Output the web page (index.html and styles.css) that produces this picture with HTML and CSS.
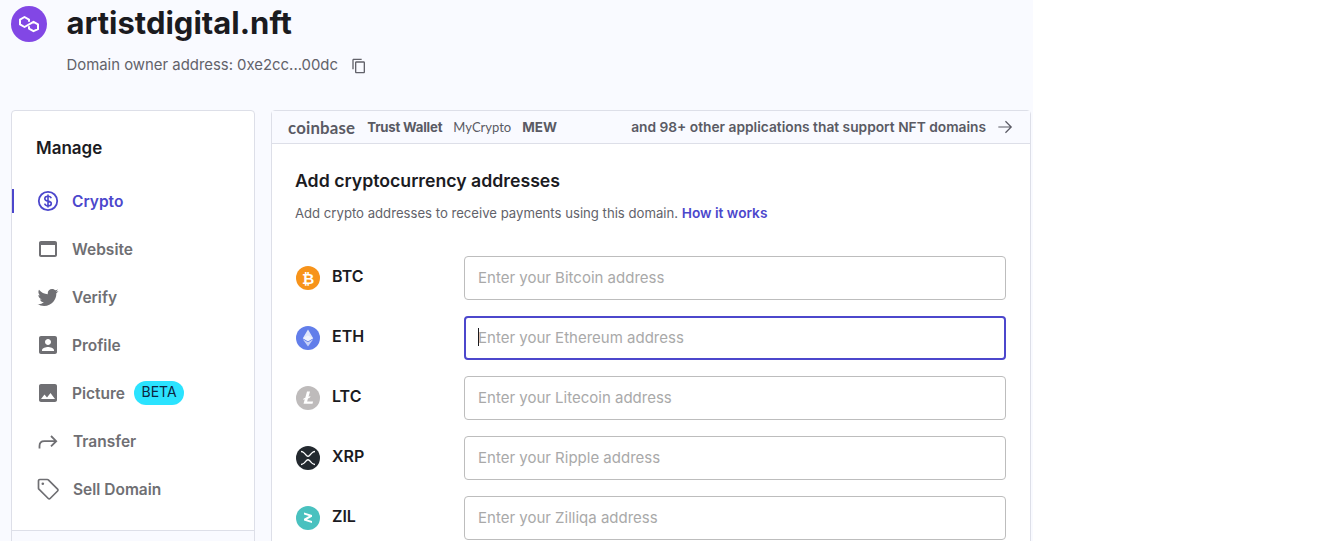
FILE: index.html
```html
<!DOCTYPE html>
<html lang="en">
<head>
<meta charset="utf-8">
<title>artistdigital.nft</title>
<link rel="stylesheet" href="styles.css">
</head>
<body>
<div class="app">
  <header class="head">
    <svg class="poly" viewBox="0 0 36 36"><circle cx="18" cy="18" r="18" fill="#8247e5"/><path d="M18 15.800v-2.200L13.500 11 9 13.600v4.800l4.500 2.600 9-5.200 4.500 2.600v4.800L22.500 25.200 18 22.600v-2.400" fill="none" stroke="#fff" stroke-width="2" stroke-linejoin="round"/></svg>
    <div class="head-text">
      <h1 class="domain">artistdigital.nft</h1>
      <div class="owner"><span>Domain owner address: 0xe2cc...00dc</span>
        <svg class="copy" viewBox="0 0 24 24"><path d="M16 1H4c-1.100 0-2 .9-2 2v14h2V3h12V1zm3 4H8c-1.100 0-2 .9-2 2v14c0 1.100.9 2 2 2h11c1.100 0 2-.9 2-2V7c0-1.100-.9-2-2-2zm0 16H8V7h11v14z"/></svg>
      </div>
    </div>
  </header>
  <div class="columns">
    <aside class="side">
      <h2 class="manage">Manage</h2>
      <nav class="nav">
        <a class="item active"><svg class="ico" viewBox="0 0 24 24"><circle cx="12" cy="12" r="9.200" fill="none" stroke="currentColor" stroke-width="1.800"/><path d="M15.200 9.300c-.3-1.300-1.600-2-3.200-2-1.800 0-3.200.9-3.200 2.400 0 3.300 6.500 1.500 6.500 4.700 0 1.500-1.500 2.400-3.300 2.400-1.700 0-3-.8-3.300-2.200M12 5.500v13" fill="none" stroke="currentColor" stroke-width="1.600"/></svg>Crypto</a>
        <a class="item"><svg class="ico" viewBox="0 0 24 24"><path d="M19 4H5c-1.110 0-2 .9-2 2v12c0 1.100.89 2 2 2h14c1.100 0 2-.9 2-2V6c0-1.100-.89-2-2-2zm0 14H5V8h14v10z"/></svg>Website</a>
        <a class="item"><svg class="ico" viewBox="0 0 24 24"><path d="M22.460 6c-.77.35-1.600.58-2.460.69.88-.53 1.560-1.370 1.880-2.380-.83.5-1.750.85-2.720 1.050C18.370 4.500 17.260 4 16 4c-2.350 0-4.270 1.920-4.270 4.290 0 .34.04.67.11.98C8.280 9.090 5.110 7.380 3 4.790c-.37.63-.58 1.370-.58 2.150 0 1.490.75 2.810 1.910 3.560-.71 0-1.370-.2-1.950-.5v.03c0 2.080 1.480 3.820 3.440 4.210a4.220 4.220 0 0 1-1.930.07 4.280 4.280 0 0 0 4 2.980 8.521 8.521 0 0 1-5.330 1.840c-.34 0-.68-.02-1.020-.06C3.440 20.290 5.700 21 8.120 21 16 21 20.330 14.460 20.330 8.790c0-.19 0-.37-.01-.56.84-.6 1.560-1.360 2.140-2.230z"/></svg>Verify</a>
        <a class="item"><svg class="ico" viewBox="0 0 24 24"><path d="M3 5v14c0 1.100.89 2 2 2h14c1.100 0 2-.9 2-2V5c0-1.100-.9-2-2-2H5c-1.110 0-2 .9-2 2zm12 4c0 1.660-1.340 3-3 3s-3-1.340-3-3 1.340-3 3-3 3 1.340 3 3zm-9 8c0-2 4-3.100 6-3.100s6 1.100 6 3.100v1H6v-1z"/></svg>Profile</a>
        <a class="item"><svg class="ico" viewBox="0 0 24 24"><path d="M21 19V5c0-1.100-.9-2-2-2H5c-1.100 0-2 .9-2 2v14c0 1.100.9 2 2 2h14c1.100 0 2-.9 2-2zM8.500 13.500l2.500 3.010L14.500 12l4.500 6H5l3.500-4.500z"/></svg>Picture<span class="beta">BETA</span></a>
        <a class="item shifted"><svg class="ico" viewBox="0 0 24 24"><path d="M3.500 19.500v-2.500c0-3 1.800-4.800 4.800-4.800H20M15 7l5.200 5.200L15 17.400" fill="none" stroke="currentColor" stroke-width="1.800"/></svg>Transfer</a>
        <a class="item shifted"><svg class="ico" viewBox="0 0 24 24"><path d="M2.500 3.800c0-.7.6-1.300 1.300-1.300h7.500c.4 0 .7.1 1 .4l9.300 9.300c.5.5.5 1.300 0 1.800l-7.500 7.500c-.5.5-1.300.5-1.800 0l-9.400-9.300c-.3-.3-.4-.6-.4-1z" fill="none" stroke="currentColor" stroke-width="1.700"/><circle cx="6.800" cy="6.800" r="1.300"/></svg>Sell Domain</a>
      </nav>
      <div class="side-foot"></div>
    </aside>
    <main class="card">
      <div class="apps">
        <div class="logos">
          <span class="logo-coinbase">coinbase</span>
          <span class="logo-trust">Trust Wallet</span>
          <span class="logo-my">MyCrypto</span>
          <span class="logo-mew">MEW</span>
        </div>
        <div class="apps-more">
          <span>and 98+ other applications that support NFT domains</span>
          <svg class="arrow" viewBox="0 0 18 18"><path d="M1.500 9h14M9.500 2.500L16 9l-6.500 6.500" fill="none" stroke="currentColor" stroke-width="1.400"/></svg>
        </div>
      </div>
      <section class="body">
        <h3 class="title">Add cryptocurrency addresses</h3>
        <p class="sub">Add crypto addresses to receive payments using this domain. <a class="link">How it works</a></p>
        <div class="rows">
          <div class="row">
            <div class="coin">
              <svg class="coin-ico" viewBox="0 0 24 24"><circle cx="12" cy="12" r="12" fill="#f7931a"/><text x="12" y="17.500" class="coin-b">₿</text></svg>
              <span>BTC</span>
            </div>
            <div class="field"><input class="input" placeholder="Enter your Bitcoin address"></div>
          </div>
          <div class="row">
            <div class="coin">
              <svg class="coin-ico" viewBox="0 0 24 24"><circle cx="12" cy="12" r="12" fill="#627eea"/><path d="M12 3.500L6.800 12.200 12 15.200l5.200-3z" fill="#fff" opacity=".8"/><path d="M12 16.300l-5.200-3L12 20.500l5.200-7.200z" fill="#fff" opacity=".65"/><path d="M12 9.500l-5.200 2.700 5.200 3 5.200-3z" fill="#fff" opacity=".5"/></svg>
              <span>ETH</span>
            </div>
            <div class="field focused"><input class="input" placeholder="Enter your Ethereum address"></div>
          </div>
          <div class="row">
            <div class="coin">
              <svg class="coin-ico" viewBox="0 0 24 24"><circle cx="12" cy="12" r="12" fill="#bebbbb"/><path d="M11 5.500h3l-1.500 5.200 2-.8-.5 1.700-2 .8-.9 3h6l-.6 2.300H7.500l1.300-4.400-1.600.6.4-1.500 1.700-.7z" fill="#fff"/></svg>
              <span>LTC</span>
            </div>
            <div class="field"><input class="input" placeholder="Enter your Litecoin address"></div>
          </div>
          <div class="row">
            <div class="coin">
              <svg class="coin-ico" viewBox="0 0 24 24"><circle cx="12" cy="12" r="12" fill="#23292f"/><path d="M5 5.500c1.500 0 2.300.6 3.300 1.600l2.200 2.400c.9.900 2.100.9 3 0l2.200-2.400c1-1 1.800-1.600 3.300-1.600M5 18.500c1.500 0 2.300-.6 3.300-1.600l2.200-2.400c.9-.9 2.100-.9 3 0l2.200 2.400c1 1 1.800 1.600 3.300 1.600" fill="none" stroke="#fff" stroke-width="1.300"/></svg>
              <span>XRP</span>
            </div>
            <div class="field"><input class="input" placeholder="Enter your Ripple address"></div>
          </div>
          <div class="row">
            <div class="coin">
              <svg class="coin-ico" viewBox="0 0 24 24"><circle cx="12" cy="12" r="12" fill="#49c1bf"/><path d="M8 6.500l8 2.500v1.700l-5 2.800 5 1.500v2l-8-2.500v-1.700l5-2.800-5-1.500z" fill="#fff"/></svg>
              <span>ZIL</span>
            </div>
            <div class="field"><input class="input" placeholder="Enter your Zilliqa address"></div>
          </div>
        </div>
      </section>
    </main>
  </div>
</div>
</body>
</html>
```
FILE: styles.css
```css
* { box-sizing: border-box; }
html, body { margin: 0; padding: 0; background: #fff; }
body { font-family: Inter, "Liberation Sans", sans-serif; color: #1b1b1f; height: 544px; overflow: hidden; }
.app { width: 1033px; height: 541px; overflow: hidden; background: #f9faff; padding-left: 11px; }

.head { display: flex; align-items: flex-start; height: 110px; gap: 20px; padding-top: 5px; }
.poly { width: 36px; height: 36px; flex: none; margin-top: 1px; }
.head-text { display: flex; flex-direction: column; margin-left: -.5px; }
.domain { margin: 0; font-size: 31px; line-height: 36px; font-weight: 700; color: #1b1b1f; }
.owner { display: flex; align-items: center; gap: 13px; margin-top: 12px; font-size: 14.900px; line-height: 24px; color: #62626a; }
.copy { width: 16px; height: 16px; fill: #62626a; margin-top: 2px; }

.columns { display: flex; align-items: flex-start; gap: 16px; }
.side { width: 244px; height: 500px; background: #fff; border: 1px solid #dddfe8; border-radius: 4px 4px 0 0; padding-top: 26px; }
.manage { margin: 0 0 18px 24px; font-size: 17px; line-height: 22px; font-weight: 600; color: #1b1b1f; }
.nav { display: flex; flex-direction: column; }
.item { position: relative; display: flex; align-items: center; height: 48px; padding-left: 24px; gap: 12px; font-size: 15.500px; font-weight: 600; color: #6f6f73; }
.item.shifted { gap: 13px; }
.item.active { color: #4c47cc; }
.item.active::before { content: ""; position: absolute; left: 0; top: 12px; width: 2px; height: 24px; background: #4c47cc; }
.ico { width: 24px; height: 24px; flex: none; fill: currentColor; }
.beta { margin-left: -3px; width: 50px; height: 24px; border-radius: 12px; background: #2be3ff; color: #0d2540; font-size: 14px; font-weight: 400; line-height: 22px; text-align: center; }
.side-foot { margin-top: 17px; height: 20px; border-top: 1px solid #dddfe8; background: #f9faff; }

.card { width: 760px; height: 500px; background: #fff; border: 1px solid #dddfe8; border-radius: 4px 4px 0 0; }
.apps { display: flex; align-items: center; justify-content: space-between; height: 33px; background: #f9faff; border-bottom: 1px solid #dddfe8; padding: 0 17px 0 16px; color: #5a5a64; }
.logos { display: flex; align-items: center; gap: 11px; }
.logo-coinbase { font-family: Lato, sans-serif; font-size: 16.800px; font-weight: 700; letter-spacing: .2px; margin-right: 1px; }
.logo-trust { font-size: 13.200px; font-weight: 700; letter-spacing: -.2px; }
.logo-my { font-family: Lato, sans-serif; font-size: 13px; margin-top: -1px; }
.logo-mew { font-size: 13.500px; font-weight: 700; }
.apps-more { display: flex; align-items: center; gap: 11px; font-size: 13.750px; font-weight: 600; }
.arrow { width: 16px; height: 16px; }

.body { padding: 25px 23px 0; }
.title { margin: 0; font-size: 17.700px; line-height: 24px; font-weight: 600; color: #1b1b1f; }
.sub { margin: 9px 0 0; font-size: 13.150px; line-height: 22px; color: #62626a; }
.link { color: #4c47cc; font-weight: 600; font-size: 13.700px; }
.rows { display: flex; flex-direction: column; gap: 16px; margin-top: 32px; }
.row { display: flex; align-items: center; height: 44px; }
.coin { display: flex; align-items: center; gap: 12px; width: 168px; margin-left: 1px; font-size: 16px; font-weight: 600; color: #1b1b1f; }
.coin span { margin-top: -4px; }
.coin-ico { width: 24px; height: 24px; flex: none; }
.coin-b { font-family: "DejaVu Sans", sans-serif; font-size: 15px; font-weight: 700; fill: #fff; text-anchor: middle; }
.field { position: relative; width: 542px; height: 44px; }
.input { display: block; width: 100%; height: 100%; padding: 0 13px 2px; border: 1px solid #bdbdbd; border-radius: 4px; background: #fff; font: 400 15px Inter, "Liberation Sans", sans-serif; color: #1b1b1f; outline: none; }
.input::placeholder { color: #a9a9a9; opacity: 1; }
.focused .input { border: 2px solid #4c47cc; padding-left: 12px; }
.focused::after { content: ""; position: absolute; left: 14px; top: 12px; width: 1px; height: 18px; background: #1b1b1f; }
```
